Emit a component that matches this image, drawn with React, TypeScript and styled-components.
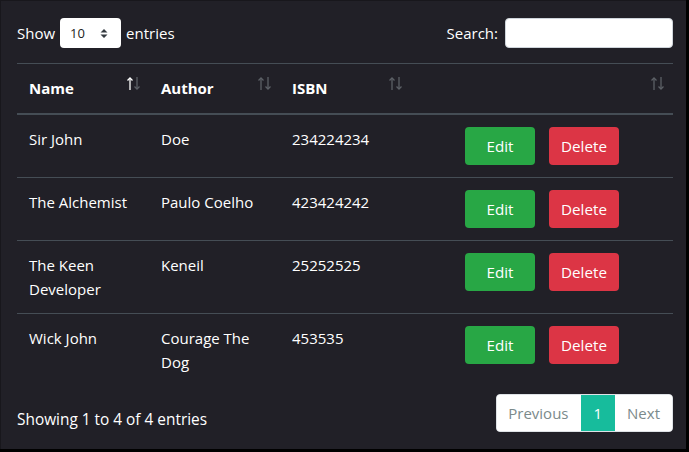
import React from 'react';
import styled, { createGlobalStyle } from 'styled-components';

const GlobalStyle = createGlobalStyle`
  html, body {
    margin: 0;
    padding: 0;
    background: #000;
  }
  body {
    font-family: 'Open Sans', 'Noto Sans', sans-serif;
    font-size: 15px;
    line-height: 24px;
    color: #fff;
  }
`;

const Frame = styled.div`
  box-sizing: border-box;
  width: 686px;
  height: 449px;
  background: #212027;
  border-top: 1px solid #18171c;
  border-left: 1px solid #18171c;
  padding: 17px 13px 0 16px;
`;

const TopBar = styled.div`
  display: flex;
  justify-content: space-between;
  align-items: center;
  height: 30px;
  margin-bottom: 15px;
`;

const Label = styled.label`
  display: flex;
  align-items: center;
  gap: 5px;
`;

const SelectBox = styled.div`
  box-sizing: border-box;
  width: 61px;
  height: 30px;
  background: #fff;
  border-radius: 4px;
  color: #222;
  font-size: 13px;
  display: flex;
  align-items: center;
  justify-content: space-between;
  padding: 0 13px 0 10px;
`;

const SearchInput = styled.input`
  box-sizing: border-box;
  width: 168px;
  height: 30px;
  border: 1px solid #ced4da;
  border-radius: 4px;
  background: #fff;
  margin-left: 2px;
`;

const Table = styled.table`
  width: 656px;
  border-collapse: collapse;
  table-layout: fixed;
`;

const Th = styled.th<{ $w: number }>`
  position: relative;
  box-sizing: border-box;
  width: ${p => p.$w}px;
  text-align: left;
  font-weight: 700;
  padding: 12px 12px 13px;
  border-top: 1px solid #454d55;
  border-bottom: 2px solid #454d55;
`;

const SortIcon = styled.span`
  position: absolute;
  right: 9px;
  top: 13px;
  display: flex;
  gap: 1px;
`;

const Td = styled.td`
  vertical-align: top;
  padding: 12px 12px;
  border-top: 1px solid #454d55;
`;

const ActionCell = styled.td`
  vertical-align: top;
  padding: 12px 12px;
  border-top: 1px solid #454d55;
`;

const Actions = styled.div`
  display: flex;
  justify-content: center;
  gap: 14px;
`;

const Button = styled.button<{ $variant: 'edit' | 'delete' }>`
  width: 70px;
  height: 38px;
  border: none;
  border-radius: 4px;
  font-family: inherit;
  font-size: 15.2px;
  color: #fff;
  background: ${p => (p.$variant === 'edit' ? '#28a745' : '#dc3545')};
  cursor: pointer;
`;

const Footer = styled.div`
  display: flex;
  justify-content: space-between;
  align-items: flex-start;
  margin-top: 8px;
`;

const Info = styled.div`
  padding-top: 14px;
  font-size: 15.4px;
`;

const Pagination = styled.div`
  display: flex;
  border: 1px solid #dee2e6;
  border-radius: 4px;
  overflow: hidden;
  background: #fff;
`;

const PageLink = styled.div<{ $active?: boolean }>`
  height: 36px;
  line-height: 36px;
  padding: 0 12px;
  color: ${p => (p.$active ? '#fff' : '#7b8a8b')};
  background: ${p => (p.$active ? '#17bc9c' : '#fff')};
  &:first-child {
    padding-left: 11px;
  }
  & + & {
    border-left: 1px solid ${p => (p.$active ? '#17bc9c' : '#dee2e6')};
  }
`;

const Arrow = ({ dir, on }: { dir: 'up' | 'down'; on?: boolean }) => (
  <svg width="6" height="13" viewBox="0 0 6 13">
    <g stroke={on ? '#fff' : '#5c6066'} strokeWidth="1.3" fill="none">
      {dir === 'up' ? (
        <>
          <line x1="3" y1="1" x2="3" y2="13" />
          <polyline points="0.5,3.5 3,1 5.5,3.5" />
        </>
      ) : (
        <>
          <line x1="3" y1="0" x2="3" y2="12" />
          <polyline points="0.5,9.5 3,12 5.5,9.5" />
        </>
      )}
    </g>
  </svg>
);

const Sort = ({ active }: { active?: boolean }) => (
  <SortIcon>
    <Arrow dir="up" on={active} />
    <Arrow dir="down" />
  </SortIcon>
);

const Caret = () => (
  <svg width="8" height="11" viewBox="0 0 8 11">
    <path d="M0.5 4.5 L4 1 L7.5 4.5 Z M0.5 6.5 L4 10 L7.5 6.5 Z" fill="#343a40" />
  </svg>
);

const books = [
  { name: 'Sir John', author: 'Doe', isbn: '234224234' },
  { name: 'The Alchemist', author: 'Paulo Coelho', isbn: '423424242' },
  { name: 'The Keen Developer', author: 'Keneil', isbn: '25252525' },
  { name: 'Wick John', author: 'Courage The Dog', isbn: '453535' },
];

export default function App() {
  return (
    <>
      <GlobalStyle />
      <Frame>
        <TopBar>
          <Label>
            Show
            <SelectBox>
              <span>10</span>
              <Caret />
            </SelectBox>
            entries
          </Label>
          <Label>
            Search:
            <SearchInput type="search" />
          </Label>
        </TopBar>
        <Table>
          <thead>
            <tr>
              <Th $w={132}>Name<Sort active /></Th>
              <Th $w={131}>Author<Sort /></Th>
              <Th $w={131}>ISBN<Sort /></Th>
              <Th $w={262}><Sort /></Th>
            </tr>
          </thead>
          <tbody>
            {books.map(b => (
              <tr key={b.isbn}>
                <Td>{b.name}</Td>
                <Td>{b.author}</Td>
                <Td>{b.isbn}</Td>
                <ActionCell>
                  <Actions>
                    <Button $variant="edit">Edit</Button>
                    <Button $variant="delete">Delete</Button>
                  </Actions>
                </ActionCell>
              </tr>
            ))}
          </tbody>
        </Table>
        <Footer>
          <Info>Showing 1 to 4 of 4 entries</Info>
          <Pagination>
            <PageLink>Previous</PageLink>
            <PageLink $active>1</PageLink>
            <PageLink>Next</PageLink>
          </Pagination>
        </Footer>
      </Frame>
    </>
  );
}
